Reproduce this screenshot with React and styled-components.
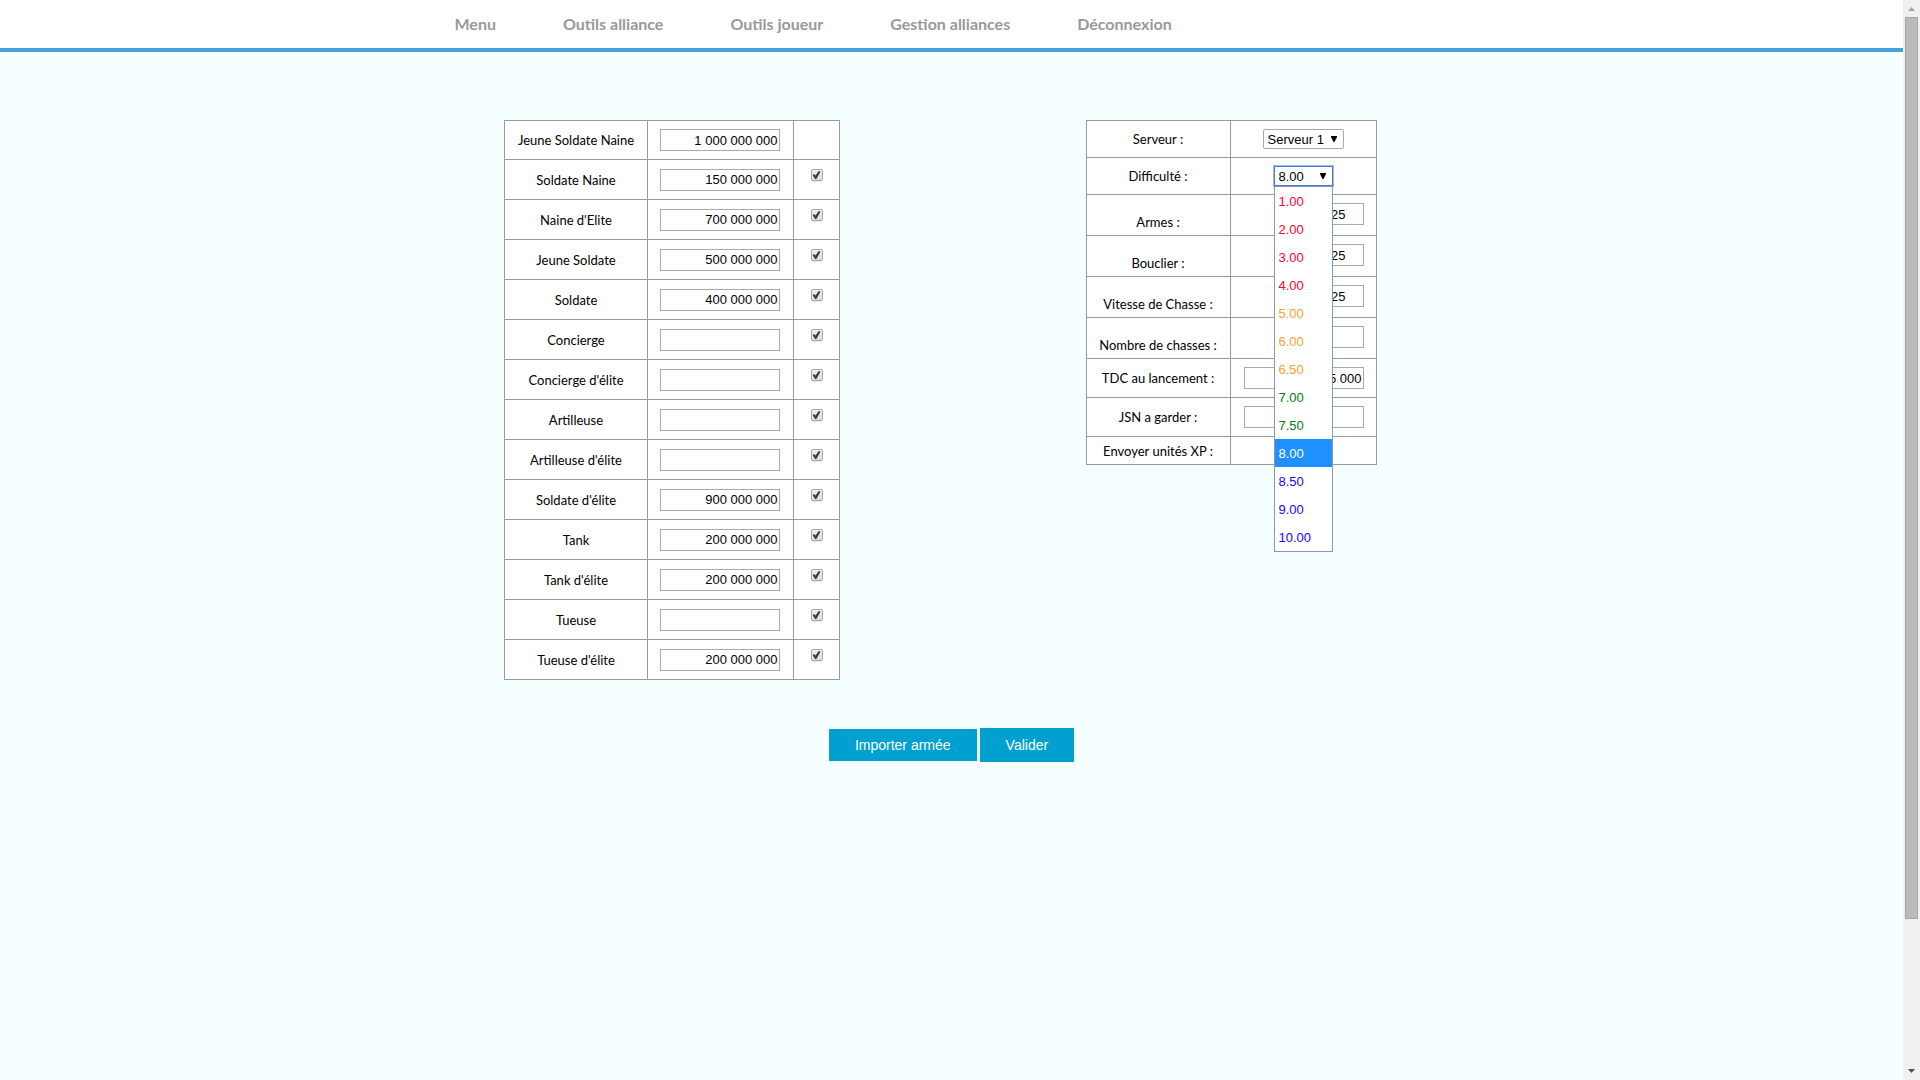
import React, { useState } from "react";
import styled, { createGlobalStyle } from "styled-components";

const GlobalStyle = createGlobalStyle`
  *, *::before, *::after { box-sizing: border-box; }
  body {
    margin: 0;
    background: #f5ffff;
    color: #000;
    font-family: Lato, "Liberation Sans", sans-serif;
    font-size: 13px;
  }
`;

const Shell = styled.div`
  display: flex;
  height: 100vh;
`;

const Page = styled.div`
  flex: 1;
  min-width: 0;
  overflow: hidden;
`;

const Header = styled.header`
  background: #fff;
  border-bottom: 4px solid #46a2d8;
`;

const Nav = styled.nav`
  display: flex;
  gap: 67px;
  max-width: 994px;
  margin: 0 auto;
`;

const NavLink = styled.a`
  color: #999;
  font-size: 16px;
  font-weight: 700;
  line-height: 48px;
  text-decoration: none;
  white-space: nowrap;
`;

const Columns = styled.div`
  display: grid;
  grid-template-columns: 1fr 1fr;
  justify-items: center;
  align-items: start;
  max-width: 1118px;
  margin: 0 auto;
  padding-top: 68px;
`;

const Table = styled.table`
  border-collapse: collapse;
  background: #fff;
  table-layout: fixed;
  width: ${(p) => p.$width}px;
`;

const Row = styled.tr`
  height: ${(p) => p.$height}px;
`;

const LabelCell = styled.th`
  width: ${(p) => p.$width}px;
  border: 1px solid #999;
  padding: ${(p) => (p.$low ? "13px 0 0" : "0")};
  font-weight: 400;
  line-height: 16px;
  text-align: center;
`;

const Cell = styled.td`
  width: 146px;
  border: 1px solid #999;
  padding: 0;
  text-align: center;
  line-height: 0;
`;

const CountCell = styled(Cell)`
  padding-right: 2px;
`;

const TickCell = styled(Cell)`
  width: 46px;
  padding-top: 9px;
  vertical-align: top;
`;

const SettingCell = styled(Cell)`
  padding: 8px 12px 0 0;
  text-align: right;
  vertical-align: top;
`;

const TextBox = styled.input`
  width: ${(p) => (p.$spinner ? 80 : 120)}px;
  height: 22px;
  border: 1px solid #a9a9a9;
  padding: 1px ${(p) => (p.$spinner ? 17 : 1)}px 1px 1px;
  background: #fff;
  color: #000;
  font: 13px/16px "Liberation Sans", Arial, sans-serif;
  text-align: right;
`;

const Tick = styled.input`
  appearance: none;
  display: inline-grid;
  place-items: center;
  width: 12px;
  height: 12px;
  margin: 0;
  border: 1px solid #a6a6a6;
  border-radius: 2px;
  background: linear-gradient(#eee, #dcdcdc);
  box-shadow: 0 1px 1px #e4e4e4;
  vertical-align: top;

  &:checked::before {
    content: "";
    width: 8px;
    height: 8px;
    background: #3c3c3c;
    clip-path: polygon(0 50%, 18% 36%, 38% 56%, 78% 0, 100% 10%, 48% 100%, 32% 100%);
  }
`;

const Picker = styled.div`
  display: inline-grid;
  grid-template-columns: 1fr 18px;
  align-items: center;
  position: relative;
  width: ${(p) => p.$width}px;
  vertical-align: middle;
`;

const Select = styled.select`
  appearance: none;
  grid-area: 1 / 1 / 2 / 3;
  height: 20px;
  margin: 0;
  border: 1px solid ${(p) => (p.$open ? "#4a7ac8" : "#a9a9a9")};
  border-radius: ${(p) => (p.$open ? 0 : 2)}px;
  outline: none;
  box-shadow: ${(p) => (p.$open ? "0 0 0 1px #9dbcee" : "none")};
  padding: 1px 4px 0;
  background: #fff;
  color: #000;
  font: 13px/18px "Liberation Sans", Arial, sans-serif;
`;

const Arrow = styled.svg`
  grid-area: 1 / 2 / 2 / 3;
  z-index: 1;
  width: 6px;
  height: 6px;
  margin-left: 5px;
  pointer-events: none;
`;

const OptionList = styled.ul`
  position: absolute;
  z-index: 2;
  top: 20px;
  left: 0;
  width: 59px;
  margin: 0;
  border: 1px solid #7f9db9;
  padding: 0;
  background: #fff;
  list-style: none;
`;

const Option = styled.li`
  padding: 2px 4px 0;
  background: ${(p) => (p.$active ? "#1e90ff" : "transparent")};
  color: ${(p) => (p.$active ? "#fff" : p.$color)};
  font: 13px/26px "Liberation Sans", Arial, sans-serif;
  text-align: left;
`;

const Actions = styled.div`
  display: flex;
  justify-content: center;
  align-items: center;
  gap: 3px;
  padding-top: 48px;
`;

const Button = styled.button`
  border: 0;
  padding: ${(p) => (p.$primary ? 9 : 8)}px 26px;
  background: #00a1d0;
  color: #fff;
  font: 14px/16px "Liberation Sans", Arial, sans-serif;
`;

const ScrollTrack = styled.div`
  display: flex;
  flex-direction: column;
  align-items: center;
  width: 17px;
  background: #f0f0f0;
`;

const ScrollEnd = styled.svg`
  flex: none;
  width: 17px;
  height: 17px;
`;

const ScrollSpace = styled.div`
  flex: 1;
  width: 13px;
`;

const ScrollThumb = styled.div`
  height: 86.2%;
  border: 1px solid #a8a8a8;
  background: #bababa;
`;

const links = ["Menu", "Outils alliance", "Outils joueur", "Gestion alliances", "Déconnexion"];

const units = [
  ["Jeune Soldate Naine", "1 000 000 000"],
  ["Soldate Naine", "150 000 000"],
  ["Naine d'Elite", "700 000 000"],
  ["Jeune Soldate", "500 000 000"],
  ["Soldate", "400 000 000"],
  ["Concierge", ""],
  ["Concierge d'élite", ""],
  ["Artilleuse", ""],
  ["Artilleuse d'élite", ""],
  ["Soldate d'élite", "900 000 000"],
  ["Tank", "200 000 000"],
  ["Tank d'élite", "200 000 000"],
  ["Tueuse", ""],
  ["Tueuse d'élite", "200 000 000"],
];

const levels = [
  ["1.00", "#ff0033"],
  ["2.00", "#ff0033"],
  ["3.00", "#ff0033"],
  ["4.00", "#ff0033"],
  ["5.00", "#ffa033"],
  ["6.00", "#ffa033"],
  ["6.50", "#ffa033"],
  ["7.00", "#007d10"],
  ["7.50", "#007d10"],
  ["8.00", "#2200ff"],
  ["8.50", "#2200ff"],
  ["9.00", "#2200ff"],
  ["10.00", "#2200ff"],
];

const settings = [
  { id: "armes", label: "Armes :", value: "25", height: 41, spinner: true },
  { id: "bouclier", label: "Bouclier :", value: "25", height: 41, spinner: true },
  { id: "vitesse", label: "Vitesse de Chasse :", value: "25", height: 41, spinner: true },
  { id: "chasses", label: "Nombre de chasses :", value: "", height: 41, spinner: true },
  { id: "tdc", label: "TDC au lancement :", value: "5 000", height: 39 },
  { id: "jsn", label: "JSN a garder :", value: "", height: 39 },
];

function DownArrow() {
  return (
    <Arrow viewBox="0 0 6 6" aria-hidden="true">
      <path d="M0 0h6v1L3.5 6h-1L0 1z" fill="#000" />
    </Arrow>
  );
}

function ArmyTable() {
  return (
    <Table $width={336}>
      <tbody>
        {units.map(([name, count], i) => (
          <Row key={name} $height={i === 0 ? 39 : 40}>
            <LabelCell $width={143} scope="row">
              <label htmlFor={`unit-${i}`}>{name}</label>
            </LabelCell>
            <CountCell>
              <TextBox id={`unit-${i}`} type="text" defaultValue={count} />
            </CountCell>
            <TickCell>
              {i > 0 && <Tick type="checkbox" defaultChecked aria-label={name} />}
            </TickCell>
          </Row>
        ))}
      </tbody>
    </Table>
  );
}

function SettingsTable() {
  const [level, setLevel] = useState("8.00");
  return (
    <Table $width={291}>
      <tbody>
        <Row $height={37}>
          <LabelCell $width={144} scope="row">
            <label htmlFor="serveur">Serveur :</label>
          </LabelCell>
          <Cell>
            <Picker $width={81}>
              <Select id="serveur" defaultValue="Serveur 1">
                <option>Serveur 1</option>
              </Select>
              <DownArrow />
            </Picker>
          </Cell>
        </Row>
        <Row $height={37}>
          <LabelCell scope="row">
            <label htmlFor="difficulte">Difficulté :</label>
          </LabelCell>
          <Cell>
            <Picker $width={59}>
              <Select
                id="difficulte"
                value={level}
                onChange={(e) => setLevel(e.target.value)}
                $open
              >
                {levels.map(([value]) => (
                  <option key={value}>{value}</option>
                ))}
              </Select>
              <DownArrow />
              <OptionList role="listbox" aria-label="Difficulté">
                {levels.map(([value, color]) => (
                  <Option
                    key={value}
                    role="option"
                    aria-selected={value === level}
                    $active={value === level}
                    $color={color}
                    onClick={() => setLevel(value)}
                  >
                    {value}
                  </Option>
                ))}
              </OptionList>
            </Picker>
          </Cell>
        </Row>
        {settings.map(({ id, label, value, height, spinner }) => (
          <Row key={id} $height={height}>
            <LabelCell $low={spinner} scope="row">
              <label htmlFor={id}>{label}</label>
            </LabelCell>
            <SettingCell>
              <TextBox id={id} type="text" defaultValue={value} $spinner={spinner} />
            </SettingCell>
          </Row>
        ))}
        <Row $height={28}>
          <LabelCell scope="row">
            <label htmlFor="xp">Envoyer unités XP :</label>
          </LabelCell>
          <Cell>
            <Tick id="xp" type="checkbox" />
          </Cell>
        </Row>
      </tbody>
    </Table>
  );
}

export default function App() {
  return (
    <Shell>
      <GlobalStyle />
      <Page>
        <Header>
          <Nav>
            {links.map((text) => (
              <NavLink key={text} href="#">
                {text}
              </NavLink>
            ))}
          </Nav>
        </Header>
        <main>
          <Columns>
            <ArmyTable />
            <SettingsTable />
          </Columns>
          <Actions>
            <Button type="button">Importer armée</Button>
            <Button type="submit" $primary>
              Valider
            </Button>
          </Actions>
        </main>
      </Page>
      <ScrollTrack aria-hidden="true">
        <ScrollEnd viewBox="0 0 17 17">
          <path d="M5 11h7L8.5 7z" fill="#a3a3a3" />
        </ScrollEnd>
        <ScrollSpace>
          <ScrollThumb />
        </ScrollSpace>
        <ScrollEnd viewBox="0 0 17 17">
          <path d="M5 6h7L8.5 10z" fill="#505050" />
        </ScrollEnd>
      </ScrollTrack>
    </Shell>
  );
}
